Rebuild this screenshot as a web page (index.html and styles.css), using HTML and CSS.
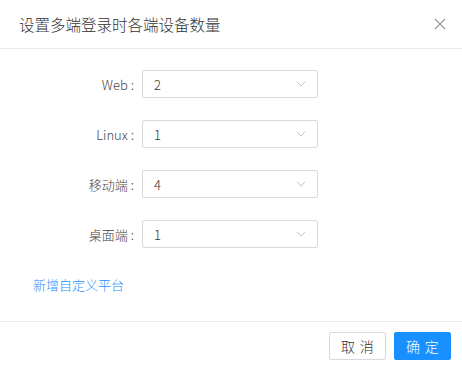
FILE: index.html
```html
<!DOCTYPE html>
<html lang="zh-CN">
<head>
  <meta charset="UTF-8" />
  <title>设置多端登录时各端设备数量</title>
  <meta name="viewport" content="width=device-width, initial-scale=1.0" />
  <link rel="stylesheet" href="styles.css">
</head>
<body>
  <div class="modal">
    <div class="modal-header">
      <div class="modal-title">设置多端登录时各端设备数量</div>
      <span class="modal-close" title="关闭">
        <svg width="12" height="12" viewBox="0 0 12 12"><path d="M1 1 L11 11 M11 1 L1 11" stroke="#999" stroke-width="1.1" fill="none"/></svg>
      </span>
    </div>

    <div class="modal-body">
      <div class="form-item">
        <label class="form-label">Web</label>
        <div class="select">
          <span class="select-value">2</span>
          <svg class="select-arrow" width="10" height="6" viewBox="0 0 10 6"><path d="M1 0.8 L5 5 L9 0.8" stroke="#c0c0c0" stroke-width="1" fill="none"/></svg>
        </div>
      </div>
      <div class="form-item">
        <label class="form-label">Linux</label>
        <div class="select">
          <span class="select-value">1</span>
          <svg class="select-arrow" width="10" height="6" viewBox="0 0 10 6"><path d="M1 0.8 L5 5 L9 0.8" stroke="#c0c0c0" stroke-width="1" fill="none"/></svg>
        </div>
      </div>
      <div class="form-item">
        <label class="form-label">移动端</label>
        <div class="select">
          <span class="select-value">4</span>
          <svg class="select-arrow" width="10" height="6" viewBox="0 0 10 6"><path d="M1 0.8 L5 5 L9 0.8" stroke="#c0c0c0" stroke-width="1" fill="none"/></svg>
        </div>
      </div>
      <div class="form-item">
        <label class="form-label">桌面端</label>
        <div class="select">
          <span class="select-value">1</span>
          <svg class="select-arrow" width="10" height="6" viewBox="0 0 10 6"><path d="M1 0.8 L5 5 L9 0.8" stroke="#c0c0c0" stroke-width="1" fill="none"/></svg>
        </div>
      </div>
      <a href="#" class="add-link">新增自定义平台</a>
    </div>

    <div class="modal-footer">
      <button class="btn"><span>取消</span></button>
      <button class="btn btn-primary"><span>确定</span></button>
    </div>
  </div>
</body>
</html>
```

FILE: styles.css
```css
body {
  margin: 0;
  padding: 0;
  background: #fff;
  font-family: "Noto Sans CJK SC", sans-serif;
  font-weight: 300;
  color: #444;
}
.modal {
  width: 462px;
  background: #fff;
}
/* header */
.modal-header {
  display: flex;
  align-items: center;
  padding: 13px 16px 13px 19px;
  border-bottom: 1px solid #e9e9e9;
}
.modal-title {
  flex: 1;
  font-size: 15.5px;
  line-height: 22px;
  color: #333;
}
.modal-close {
  display: flex;
  cursor: pointer;
}
/* body */
.modal-body {
  padding: 21px 0 26px 33px;
}
.form-item {
  display: flex;
  align-items: center;
  margin-bottom: 22px;
}
.form-label {
  width: 109px;
  text-align: right;
  font-size: 13px;
  color: #444;
  white-space: nowrap;
}
.form-label::after {
  content: ":";
  margin: 0 8px 0 3px;
}
.select {
  width: 176px;
  height: 28px;
  box-sizing: border-box;
  border: 1px solid #d9d9d9;
  border-radius: 2px;
  display: flex;
  align-items: center;
  justify-content: space-between;
  padding: 0 11px 0 11px;
}
.select-value {
  font-size: 13px;
  color: #333;
}
.add-link {
  display: inline-block;
  margin-top: 5px;
  font-size: 13px;
  line-height: 20px;
  color: #1890ff;
  text-decoration: none;
}
/* footer */
.modal-footer {
  display: flex;
  justify-content: flex-end;
  gap: 8px;
  padding: 10px 11px 9px;
  border-top: 1px solid #e9e9e9;
}
.btn {
  width: 57px;
  height: 28px;
  border: 1px solid #d9d9d9;
  border-radius: 2px;
  background: #fff;
  color: #333;
  font-family: "Noto Sans CJK SC", sans-serif;
  font-weight: 300;
  font-size: 14px;
  padding: 0;
  cursor: pointer;
}
.btn span {
  letter-spacing: 0.34em;
  margin-right: -0.34em;
}
.btn-primary {
  background: #1890ff;
  border-color: #1890ff;
  color: #fff;
}
```
